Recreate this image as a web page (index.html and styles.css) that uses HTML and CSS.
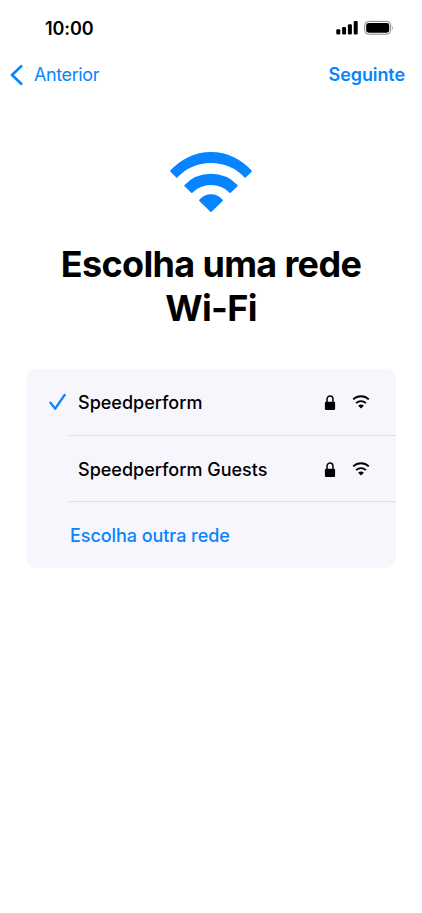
FILE: index.html
```html
<!DOCTYPE html>
<html lang="pt">
<head>
<meta charset="utf-8">
<title>Wi-Fi</title>
<link rel="stylesheet" href="styles.css">
</head>
<body>
<svg class="defs" width="0" height="0">
  <symbol id="lock" viewBox="0 0 12 16">
    <rect x="0.9" y="6.8" width="10.2" height="8.2" rx="1.2" fill="#000"/>
    <path d="M3 8V4.4a3 3.4 0 0 1 6 0V8" fill="none" stroke="#000" stroke-width="1.5"/>
  </symbol>
  <symbol id="wifi" viewBox="0 0 18 14">
    <path d="M1.2 4.4a11.3 11.3 0 0 1 15.6 0M4.1 8.1a7 7 0 0 1 9.8 0" fill="none" stroke="#000" stroke-width="1.9"/>
    <path d="M9 13.6 6.1 10.8a4.2 4.2 0 0 1 5.8 0z" fill="#000"/>
  </symbol>
</svg>
<div class="status">
  <span class="time">10:00</span>
  <svg class="signal" width="58" height="16" viewBox="0 0 58 16">
    <rect x="0.3" y="9.2" width="4" height="5.4" rx="1.1"/>
    <rect x="6.1" y="7" width="4" height="7.6" rx="1.1"/>
    <rect x="11.9" y="4.2" width="4" height="10.4" rx="1.1"/>
    <rect x="17.7" y="1" width="4" height="13.6" rx="1.1"/>
    <rect x="28.7" y="1.4" width="26" height="12.8" rx="3.8" fill="none" stroke="#888"/>
    <rect x="30.2" y="2.9" width="23" height="9.8" rx="2.4"/>
    <path d="M56.1 5.6q1.6 2.2 0 4.4z" fill="#888"/>
  </svg>
</div>
<nav class="nav">
  <a class="back">
    <svg width="14" height="22" viewBox="0 0 14 22"><path d="M12.2 2.2 3 11l9.2 8.8" fill="none" stroke="#0784ff" stroke-width="2.6" stroke-linecap="round" stroke-linejoin="round"/></svg>
    <span>Anterior</span>
  </a>
  <a class="next">Seguinte</a>
</nav>
<main>
  <svg class="hero" width="84" height="62" viewBox="169 151 84 62" fill="#0784ff" stroke="#0784ff" stroke-width="1.6" stroke-linejoin="round">
    <path d="M171 171.1A53 53 0 0 1 251 171.1L245.2 177A47 47 0 0 0 176.8 177Z"/>
    <path d="M185.1 185.6A36 36 0 0 1 236.9 185.6L230.2 192.1A27.5 27.5 0 0 0 191.8 192.1Z"/>
    <path d="M199.9 200.5A14 14 0 0 1 222.1 200.5L211 211.2Z"/>
  </svg>
  <h1>Escolha uma rede<br>Wi-Fi</h1>
  <section class="card">
    <div class="row">
      <svg class="check" width="18" height="18" viewBox="0 0 18 18"><path d="M2.4 9.6 7.2 15.7 16.6 2" fill="none" stroke="#0784ff" stroke-width="2.3" stroke-linecap="round" stroke-linejoin="round"/></svg>
      <div class="name">Speedperform</div>
      <svg class="lock" width="12" height="16"><use href="#lock"/></svg>
      <svg class="wifi" width="18" height="14"><use href="#wifi"/></svg>
    </div>
    <div class="row">
      <span class="check"></span>
      <div class="name">Speedperform Guests</div>
      <svg class="lock" width="12" height="16"><use href="#lock"/></svg>
      <svg class="wifi" width="18" height="14"><use href="#wifi"/></svg>
    </div>
    <div class="row other"><span>Escolha outra rede</span></div>
  </section>
</main>
</body>
</html>
```
FILE: styles.css
```css
* { box-sizing: border-box; }
body {
  margin: 0;
  background: #fff;
  color: #000;
  font: 500 18px/24px Inter, "Liberation Sans", sans-serif;
}
svg { display: block; flex: none; }
.defs { position: absolute; }
.status {
  display: flex;
  justify-content: space-between;
  align-items: center;
  height: 56px;
  padding: 0 28px 0 45px;
}
.time { padding-top: 2px; font-weight: 600; letter-spacing: -0.1px; }
.nav {
  display: flex;
  justify-content: space-between;
  align-items: center;
  height: 38px;
  padding: 0 17px 0 9px;
  color: #0784ff;
}
.back { display: flex; align-items: center; gap: 11px; font-weight: 400; letter-spacing: -0.4px; }
.next { font-weight: 600; letter-spacing: -0.1px; }
main { padding: 57px 26px 0; }
.hero { margin: 0 auto; }
h1 {
  margin: 29px 0 0;
  text-align: center;
  font-size: 36px;
  line-height: 44px;
  font-weight: 700;
  letter-spacing: -0.65px;
}
.card {
  margin-top: 39px;
  height: 199px;
  border-radius: 10px;
  background: #f7f6fd;
  overflow: hidden;
}
.row {
  display: flex;
  align-items: center;
  height: 66px;
  padding: 1px 26px 0 22px;
  background: linear-gradient(#dedde3, #dedde3) 43px 100% / 100% 1px no-repeat;
}
.row:first-child { height: 67px; padding-top: 0; }
.check { width: 18px; margin: 0 12px 2px 0; }
.name { flex: 1; }
.lock { margin-right: 16px; }
.wifi { margin-bottom: 2px; }
.other { padding: 1px 0 0 44px; background: none; color: #0784ff; letter-spacing: -0.06px; }
```
